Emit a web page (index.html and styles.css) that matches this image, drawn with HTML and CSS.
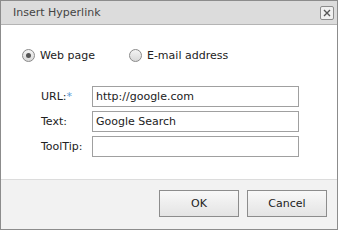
FILE: index.html
```html
<!DOCTYPE html>
<html lang="en">

<head>
    <meta charset="UTF-8" />
    <title>Insert Hyperlink</title>
    <link rel="stylesheet" href="styles.css">
</head>

<body>
    <div class="dialog">
        <!-- title bar -->
        <div class="title">
            <span class="caption">Insert Hyperlink</span>
            <span class="close">
                <svg width="8" height="8" viewBox="0 0 8 8"><path d="M1 1L7 7M7 1L1 7" stroke="#555" stroke-width="1.4" fill="none" /></svg>
            </span>
        </div>
        <!-- body -->
        <div class="body">
            <div class="types">
                <label class="radio"><span class="dot checked"></span>Web page</label>
                <label class="radio"><span class="dot"></span>E-mail address</label>
            </div>
            <div class="fields">
                <div class="row">
                    <span class="label">URL:<em>*</em></span>
                    <input type="text" value="http://google.com" />
                </div>
                <div class="row">
                    <span class="label">Text:</span>
                    <input type="text" value="Google Search" />
                </div>
                <div class="row">
                    <span class="label">ToolTip:</span>
                    <input type="text" value="" />
                </div>
            </div>
        </div>
        <!-- buttons -->
        <div class="footer">
            <button>OK</button>
            <button>Cancel</button>
        </div>
    </div>
</body>

</html>
```

FILE: styles.css
```css
* {
    margin: 0;
    padding: 0;
    box-sizing: border-box;
}

body {
    font-family: Tahoma, "DejaVu Sans", sans-serif;
    font-size: 11px;
    color: #222;
    background: #fff;
}

.dialog {
    width: 338px;
    height: 230px;
    border: 1px solid #8c8c8c;
    display: flex;
    flex-direction: column;
}

.title {
    height: 24px;
    background: #dcdcdc;
    border-bottom: 1px solid #b4b4b4;
    display: flex;
    align-items: center;
    justify-content: space-between;
    padding: 0 3px 0 12px;
}

.caption {
    color: #444;
    font-size: 11px;
}

.close {
    width: 14px;
    height: 14px;
    border: 1px solid #8c8c8c;
    border-radius: 2px;
    background: #f0f0f0;
    display: flex;
    align-items: center;
    justify-content: center;
}

.body {
    flex: 1;
    background: #fff;
    padding: 22px 0 0 21px;
}

.types {
    display: flex;
    gap: 34px;
    height: 16px;
    align-items: center;
}

.radio {
    display: flex;
    align-items: center;
    gap: 5px;
}

.dot {
    width: 13px;
    height: 13px;
    border-radius: 50%;
    border: 1px solid #8a8a8a;
    background: linear-gradient(#f4f4f4, #d8d8d8);
    display: flex;
    align-items: center;
    justify-content: center;
}

.dot.checked::after {
    content: "";
    width: 5px;
    height: 5px;
    border-radius: 50%;
    background: #555;
}

.fields {
    margin-top: 23px;
    padding-left: 19px;
    display: flex;
    flex-direction: column;
    gap: 4px;
}

.row {
    display: flex;
    align-items: center;
}

.label {
    width: 51px;
}

.label em {
    font-style: normal;
    color: #5b9bd5;
}

.row input {
    width: 207px;
    height: 21px;
    border: 1px solid #a0a0a0;
    padding: 0 3px;
    font-family: inherit;
    font-size: 11px;
    color: #222;
    outline: none;
}

.footer {
    height: 50px;
    background: #f2f2f2;
    border-top: 1px solid #dcdcdc;
    display: flex;
    justify-content: flex-end;
    align-items: center;
    gap: 8px;
    padding: 0 10px 2px 0;
}

.footer button {
    width: 80px;
    height: 27px;
    border: 1px solid #8c8c8c;
    background: linear-gradient(#f8f8f8, #e4e4e4);
    font-family: inherit;
    font-size: 11px;
    color: #222;
}
```
